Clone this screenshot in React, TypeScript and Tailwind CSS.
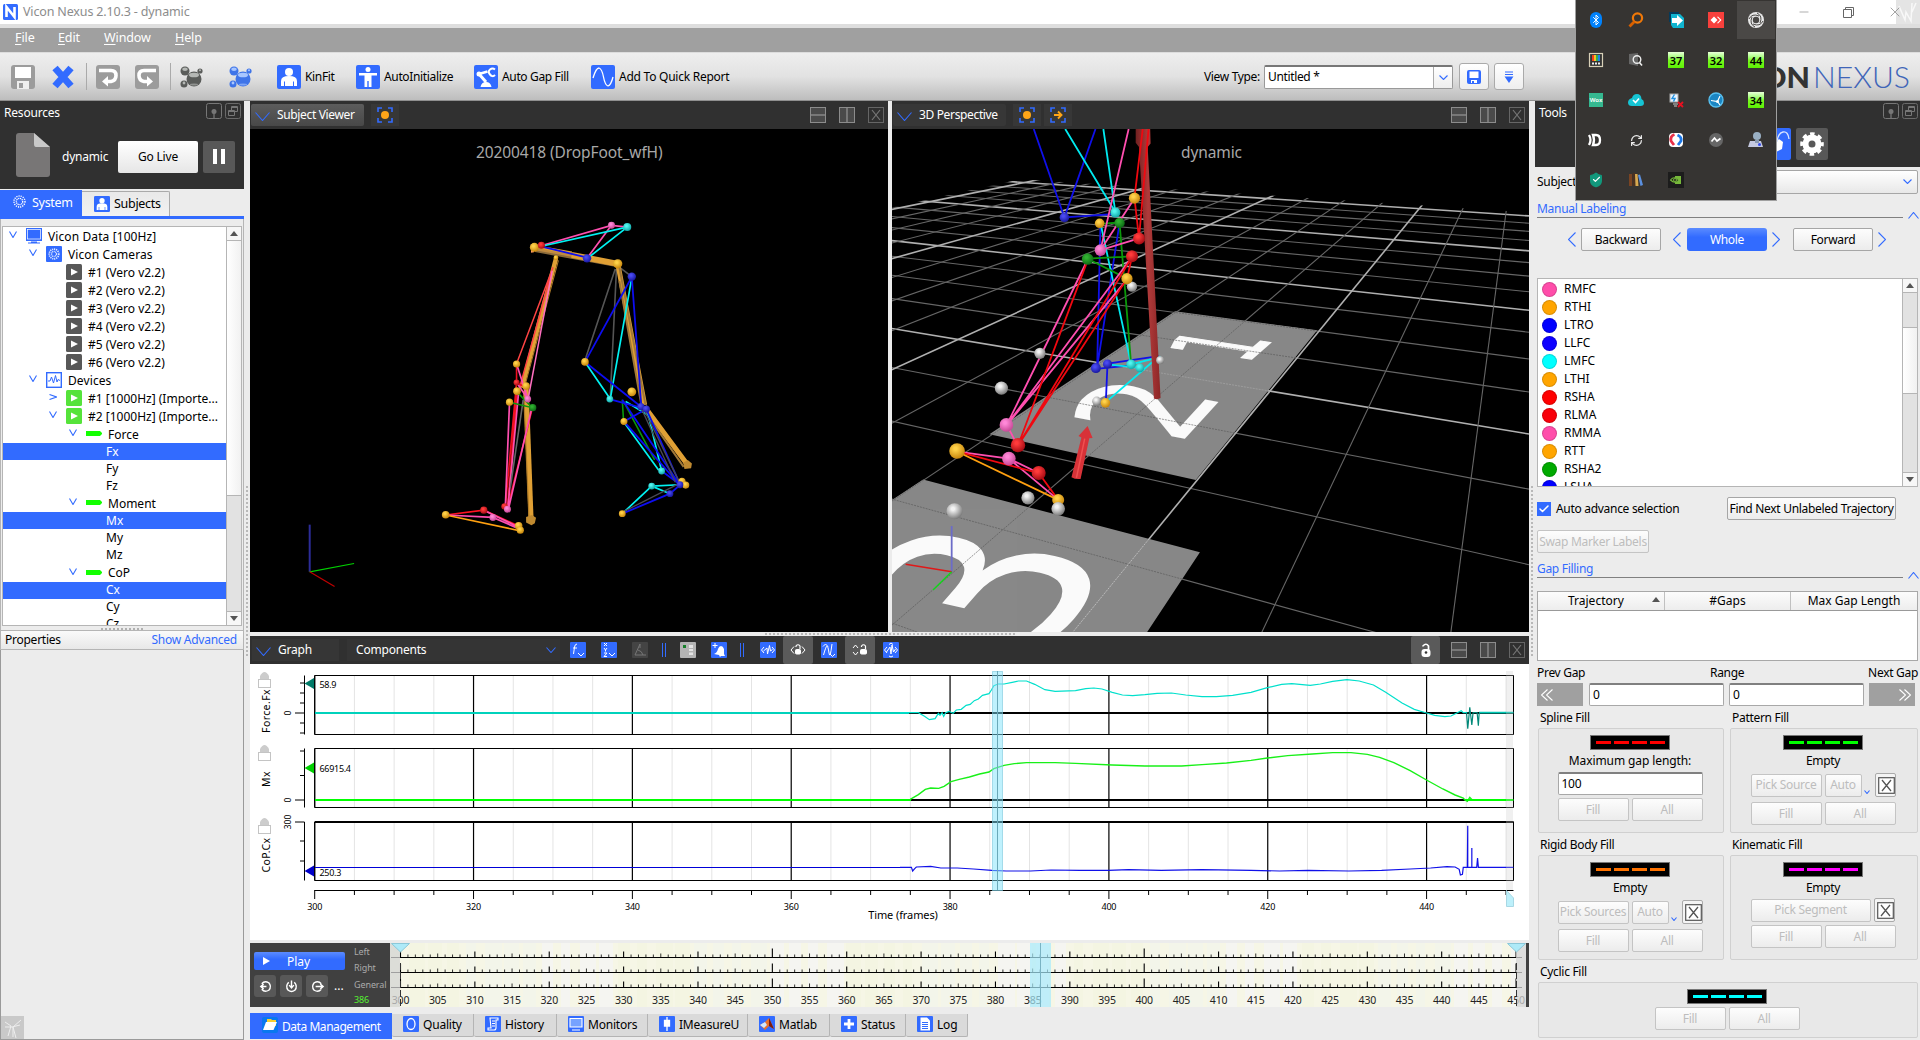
import React from "react";
import { Bluetooth, Search, Check, RefreshCw, Shield, Minus, X } from "lucide-react";

type Kids = { children?: React.ReactNode };
const BLUE = "#326bff";

/* ---------- small shared pieces ---------- */

function Chevron({ dir = "down", w = 14, h = 7, color = BLUE, sw = 1.1, className = "" }: { dir?: "down" | "up" | "left" | "right"; w?: number; h?: number; color?: string; sw?: number; className?: string }) {
  const d = {
    down: `M.5 .5L${w / 2} ${h - 0.5}L${w - 0.5} .5`,
    up: `M.5 ${h - 0.5}L${w / 2} .5L${w - 0.5} ${h - 0.5}`,
    left: `M${w - 0.5} .5L.5 ${h / 2}L${w - 0.5} ${h - 0.5}`,
    right: `M.5 .5L${w - 0.5} ${h / 2}L.5 ${h - 0.5}`,
  }[dir];
  return (
    <svg width={w} height={h} viewBox={`0 0 ${w} ${h}`} className={`shrink-0 ${className}`}>
      <path d={d} fill="none" stroke={color} strokeWidth={sw} />
    </svg>
  );
}

function Tri({ dir }: { dir: "up" | "down" }) {
  return (
    <svg width="8" height="5" viewBox="0 0 8 5" className="shrink-0">
      <path d={dir === "up" ? "M0 5L4 0L8 5Z" : "M0 0L4 5L8 0Z"} fill="#555" />
    </svg>
  );
}

function PinIcons() {
  return (
    <div className="flex gap-[3px]">
      <svg width="16" height="16" viewBox="0 0 16 16">
        <rect x=".5" y=".5" width="15" height="15" rx="2" fill="none" stroke="#777" />
        <circle cx="8" cy="8.500" r="2.500" fill="#777" />
        <path d="M8 8V15" stroke="#777" strokeWidth="1.3" />
      </svg>
      <svg width="16" height="16" viewBox="0 0 16 16">
        <rect x=".5" y=".5" width="15" height="15" rx="2" fill="none" stroke="#6a6a6a" />
        <path d="M6.500 7V3.500H12.500V8.500H9.500M6 4.500H12" fill="none" stroke="#777" />
        <path d="M3.500 7.500H9.500V12.500H3.500ZM3.500 8.500H9.500" fill="none" stroke="#777" />
      </svg>
    </div>
  );
}

function WindowIcons() {
  return (
    <div className="flex gap-[13px]">
      <svg width="16" height="16" viewBox="0 0 16 16">
        <rect x=".5" y=".5" width="15" height="15" fill="#4a4a4a" stroke="#8c8c8c" />
        <path d="M1 8H15" stroke="#8c8c8c" strokeWidth="1.4" />
      </svg>
      <svg width="16" height="16" viewBox="0 0 16 16">
        <rect x=".5" y=".5" width="15" height="15" fill="#4a4a4a" stroke="#8c8c8c" />
        <path d="M8 1V15" stroke="#8c8c8c" strokeWidth="1.4" />
      </svg>
      <svg width="16" height="16" viewBox="0 0 16 16">
        <rect x=".5" y=".5" width="15" height="15" fill="none" stroke="#666" />
        <path d="M4 3L12 13M12 3L4 13" stroke="#777" strokeWidth="1.2" />
      </svg>
    </div>
  );
}

function Focus({ arrow = false }: { arrow?: boolean }) {
  return (
    <span className="flex h-[22px] w-7 items-center justify-center bg-[#373737]">
      <svg width="16" height="16" viewBox="0 0 16 16">
        <path d="M1 5V1H5M11 1H15V5M15 11V15H11M5 15H1V11" fill="none" stroke={BLUE} strokeWidth="1.6" />
        {arrow ? <path d="M4 8H11M8 4.500L11.500 8L8 11.500" fill="none" stroke="#ffa518" strokeWidth="1.9" /> : <circle cx="8" cy="8" r="4" fill="#ffa518" />}
      </svg>
    </span>
  );
}

const Person = ({ size = 24 }: { size?: number }) => (
  <svg width={size} height={size} viewBox="0 0 24 24" className="shrink-0">
    <rect width="24" height="24" rx="2" fill={BLUE} />
    <circle cx="12" cy="7" r="4" fill="#fff" />
    <path d="M4 21V16Q4 11 12 11T20 16V21H17V16.500H16V21H8V16.500H7V21Z" fill="#fff" />
  </svg>
);

/* ---------- top bars ---------- */

function TitleBar() {
  return (
    <div className="flex h-[24px] shrink-0 items-center bg-white pl-[3px] pr-0">
      <svg width="15" height="16" viewBox="0 0 15 16">
        <rect width="15" height="16" rx="1.5" fill={BLUE} />
        <path d="M3.500 13V3L11.500 13V3" fill="none" stroke="#fff" strokeWidth="2.6" />
      </svg>
      <span className="ml-[5px] text-[12.5px] tracking-[-0.15px] text-[#8c8c8c]">Vicon Nexus 2.10.3 - dynamic</span>
      <div className="ml-auto flex h-full items-center text-[#777]">
        <Minus size={14} strokeWidth={1} className="mr-[32px]" />
        <svg width="11" height="11" viewBox="0 0 11 11" className="mr-[33px]">
          <path d="M.5 2.500H8.500V10.500H.5ZM2.500 2.500V.5H10.500V8.500H8.500" fill="none" stroke="#666" />
        </svg>
        <X size={16} strokeWidth={1} className="relative -mr-[7px]" />
        <span className="h-full w-[24px] bg-[#e4e4e4]">
          <svg width="24" height="24" viewBox="0 0 24 24">
            <path d="M3 6L9 20L10 12L15 21L16 3M20 3L16 12" fill="none" stroke="#f8f8f8" strokeWidth="1.5" />
          </svg>
        </span>
      </div>
    </div>
  );
}

function MenuBar() {
  const items: [string, string, string][] = [
    ["F", "ile", "w-[43px]"],
    ["E", "dit", "w-[46px]"],
    ["W", "indow", "w-[71px]"],
    ["H", "elp", "w-[60px]"],
  ];
  return (
    <div className="flex h-[29px] shrink-0 items-center border-b border-t-[4px] border-b-[#ddd] border-t-[#dedede] bg-[#a0a0a0] pb-[5px] pl-[15px] text-[12.5px] tracking-[-0.1px] text-white">
      {items.map(([a, b, w]) => (
        <span key={b} className={w}>
          <u className="underline-offset-2">{a}</u>
          {b}
        </span>
      ))}
    </div>
  );
}

function Molecule({ c, hi }: { c: string; hi: string }) {
  return (
    <svg width="24" height="24" viewBox="0 0 24 24" className="shrink-0">
      <g fill={c}>
        <circle cx="5" cy="6" r="4.500" />
        <circle cx="14" cy="14" r="7.500" />
        <circle cx="20" cy="6" r="2.600" />
        <circle cx="4" cy="19" r="3.500" />
      </g>
      <g fill={hi}>
        <ellipse cx="5" cy="4.300" rx="2.800" ry="1.700" />
        <ellipse cx="14" cy="10" rx="5" ry="2.300" />
        <circle cx="20" cy="5.300" r="1" />
        <circle cx="4" cy="18" r="1.400" />
        <ellipse cx="14" cy="19.500" rx="4" ry="1" opacity=".6" />
      </g>
    </svg>
  );
}

function Toolbar() {
  return (
    <div className="flex h-[48px] shrink-0 items-center border-b border-[#8f8f8f] bg-linear-to-b from-[#eeeeee] via-[#e2e2e2] to-[#bdbdbd] pl-[11px] text-[12px] tracking-[-0.35px] text-black">
      <svg width="24" height="24" viewBox="0 0 24 24" className="shrink-0">
        <rect width="24" height="24" rx="3" fill="#9c9c9c" />
        <path d="M4 2H20V13H4Z" fill="#fff" />
        <path d="M6 16H18V24H6Z" fill="#eee" />
        <path d="M8 18H12V23H8Z" fill="#9c9c9c" />
      </svg>
      <svg width="24" height="24" viewBox="0 0 24 24" className="ml-4 shrink-0">
        <path d="M4 3L20 21M20 3L4 21" stroke={BLUE} strokeWidth="7" />
      </svg>
      <span className="ml-[11px] h-[27px] w-px bg-[#aaa]" />
      {[0, 1].map((i) => (
        <svg key={i} width="24" height="24" viewBox="0 0 24 24" className={i ? "ml-[15px] shrink-0" : "ml-[9px] shrink-0"}>
          <rect width="24" height="24" rx="3" fill="#9c9c9c" />
          <g transform={i ? "matrix(-1 0 0 1 24 0)" : undefined}>
            <path d="M3 5.500H15Q20 5.500 20 10.500T15 16.500H11" fill="none" stroke="#fff" strokeWidth="3.600" />
            <path d="M12 11V21.500L6 16.500Z" fill="#fff" />
          </g>
        </svg>
      ))}
      <span className="ml-[11px] h-[27px] w-px bg-[#aaa]" />
      <div className="ml-[9px]">
        <Molecule c="#5a5c5a" hi="#b5b8b5" />
      </div>
      <div className="ml-[25px]">
        <Molecule c="#3f74e8" hi="#a8c6ff" />
      </div>
      <div className="ml-[24px] flex w-[79px] items-center gap-1">
        <Person />
        <span>KinFit</span>
      </div>
      <div className="flex w-[118px] items-center gap-1">
        <svg width="24" height="24" viewBox="0 0 24 24" className="shrink-0">
          <rect width="24" height="24" rx="2" fill={BLUE} />
          <circle cx="12" cy="4.500" r="2.500" fill="#fff" />
          <path d="M3 8H21V10.500H15.500V22H12.700V16H11.300V22H8.500V10.500H3Z" fill="#fff" />
        </svg>
        <span>AutoInitialize</span>
      </div>
      <div className="flex w-[117px] items-center gap-1">
        <svg width="24" height="24" viewBox="0 0 24 24" className="shrink-0">
          <rect width="24" height="24" rx="2" fill={BLUE} />
          <path d="M5 9L13.500 6.500" stroke="#fff" strokeWidth="2.500" />
          <path d="M5 9L12 17" stroke="#fff" strokeWidth="3" />
          <circle cx="5" cy="9" r="2.500" fill="#fff" />
          <path d="M21 4.500Q18.500 2.500 16 4.500T16 9.500T21 10" fill="none" stroke="#fff" strokeWidth="2" />
          <path d="M6.500 22Q7.500 17 12 17T17.500 22Z" fill="#fff" />
        </svg>
        <span>Auto Gap Fill</span>
      </div>
      <div className="flex items-center gap-1">
        <svg width="24" height="24" viewBox="0 0 24 24" className="shrink-0">
          <rect width="24" height="24" rx="2" fill={BLUE} />
          <path d="M2 13Q5 3 8 3Q11 4 12.500 12T17 21Q20 20 22 12" fill="none" stroke="#fff" strokeWidth="1.300" />
        </svg>
        <span className="tracking-[-0.25px]">Add To Quick Report</span>
      </div>
      <div className="ml-auto flex w-[716px] items-center">
        <span className="w-[60px]">View Type:</span>
        <div className="flex h-[24px] w-[189px] items-center rounded-[2px] border border-[#999] border-t-2 border-t-[#777] bg-white pl-[3px]">
          <span>Untitled *</span>
          <span className="ml-auto flex h-full w-[19px] items-center justify-center border-l border-[#aaa] bg-linear-to-b from-white to-[#eee]">
            <Chevron w={9} h={5} />
          </span>
        </div>
        <span className="ml-[6px] flex h-[27px] w-[30px] items-center justify-center rounded-[3px] border border-[#aaa] bg-linear-to-b from-white to-[#eee]">
          <svg width="14" height="14" viewBox="0 0 14 14">
            <rect width="14" height="14" rx="2" fill={BLUE} />
            <path d="M2.500 1.500H11.500V8H2.500ZM4 10H10V13H4Z" fill="#fff" />
            <path d="M5 11H7V13H5Z" fill={BLUE} />
          </svg>
        </span>
        <span className="ml-[5px] flex h-[27px] w-[30px] items-center justify-center rounded-[3px] border border-[#aaa] bg-linear-to-b from-white to-[#eee]">
          <svg width="10" height="12" viewBox="0 0 10 12">
            <path d="M1 1H9M1 3.500H9" stroke={BLUE} strokeWidth="1.200" />
            <path d="M.5 5.500H9.500L5 12Z" fill={BLUE} />
          </svg>
        </span>
        <svg width="150" height="40" viewBox="-5 -5 150 40" className="ml-auto mr-[10px] overflow-visible tracking-normal" fontFamily="Lato, sans-serif">
          <text x="-3" y="25.500" fontSize="29" fontWeight="900" fill="#333" textLength="48" lengthAdjust="spacingAndGlyphs">
            ON
          </text>
          <text x="48" y="25.500" fontSize="29" fontWeight="300" fill="#4065b8" textLength="97" lengthAdjust="spacingAndGlyphs">
            NEXUS
          </text>
        </svg>
      </div>
    </div>
  );
}

/* ---------- resources ---------- */

type Row = { d: number; t: string; open?: boolean; closed?: boolean; icon: "pc" | "cam" | "play" | "dev" | "green" | "bar" | "none"; sel?: boolean };
const rows: Row[] = [
  { d: 0, t: "Vicon Data [100Hz]", open: true, icon: "pc" },
  { d: 1, t: "Vicon Cameras", open: true, icon: "cam" },
  ...[1, 2, 3, 4, 5, 6].map((n): Row => ({ d: 2, t: `#${n} (Vero v2.2)`, icon: "play" })),
  { d: 1, t: "Devices", open: true, icon: "dev" },
  { d: 2, t: "#1 [1000Hz] (Importe...", closed: true, icon: "green" },
  { d: 2, t: "#2 [1000Hz] (Importe...", open: true, icon: "green" },
  { d: 3, t: "Force", open: true, icon: "bar" },
  { d: 4, t: "Fx", icon: "none", sel: true },
  { d: 4, t: "Fy", icon: "none" },
  { d: 4, t: "Fz", icon: "none" },
  { d: 3, t: "Moment", open: true, icon: "bar" },
  { d: 4, t: "Mx", icon: "none", sel: true },
  { d: 4, t: "My", icon: "none" },
  { d: 4, t: "Mz", icon: "none" },
  { d: 3, t: "CoP", open: true, icon: "bar" },
  { d: 4, t: "Cx", icon: "none", sel: true },
  { d: 4, t: "Cy", icon: "none" },
  { d: 4, t: "Cz", icon: "none" },
];

function TreeIcon({ k }: { k: Row["icon"] }) {
  if (k === "none") return null;
  return (
    <svg width="16" height="16" viewBox="0 0 16 16" className="shrink-0">
      {k === "pc" && (
        <>
          <rect x=".5" y=".5" width="15" height="12" fill={BLUE} stroke={BLUE} />
          <rect x="1.500" y="1.500" width="13" height="9.500" fill={BLUE} stroke="#fff" strokeWidth=".7" />
          <path d="M5 13.500H11V14.500H14V15.500H2V14.500H5Z" fill={BLUE} />
        </>
      )}
      {k === "cam" && (
        <>
          <rect width="16" height="16" rx="1" fill={BLUE} />
          <circle cx="8" cy="8" r="2.500" fill="none" stroke="#dfe8ff" strokeWidth="1.400" strokeDasharray="1 .6" />
          <circle cx="8" cy="8" r="4.800" fill="none" stroke="#dfe8ff" strokeWidth="1.700" strokeDasharray="1.200 .8" />
        </>
      )}
      {(k === "play" || k === "green") && (
        <>
          <rect width="16" height="16" rx="1.500" fill={k === "play" ? "#585858" : "#55e33a"} />
          <path d="M5 4.500L12 8L5 11.500Z" fill="#fff" />
        </>
      )}
      {k === "dev" && (
        <>
          <rect x=".7" y=".7" width="14.600" height="14.600" fill="#fff" stroke={BLUE} strokeWidth="1.400" />
          <path d="M2 9H4L5.500 5L7.500 11L9.500 3.500L11 10L12 7.500L14 8.500" fill="none" stroke={BLUE} />
        </>
      )}
      {k === "bar" && <path d="M0 5H14L16 7V8L14 10H0Z" fill="#12ff00" />}
    </svg>
  );
}

const indent = ["pl-[4px]", "pl-[24px]", "pl-[44px]", "pl-[64px]", "pl-[84px]"];

function ScrollBar({ thumb, before }: { thumb: string; before: string }) {
  return (
    <div className="flex w-[15px] shrink-0 flex-col border-l border-[#b5b5b5] bg-[#e2e2e2]">
      <div className="flex h-[14px] items-center justify-center border-b border-[#b5b5b5] bg-[#f7f7f7]">
        <Tri dir="up" />
      </div>
      <div className={before} />
      <div className={`border-b border-[#b5b5b5] bg-linear-to-r from-white to-[#f1f1f1] ${thumb}`} />
      <div className="mt-auto flex h-[14px] items-center justify-center border-t border-[#b5b5b5] bg-[#f7f7f7]">
        <Tri dir="down" />
      </div>
    </div>
  );
}

function Resources() {
  return (
    <aside className="flex w-[244px] shrink-0 flex-col">
      <div className="h-[88px] shrink-0 bg-[#303030] text-white">
        <div className="flex h-[21px] items-start justify-between pl-1 pr-[3px] pt-[2px]">
          <span className="pt-[2px] text-[12px] tracking-[-0.2px]">Resources</span>
          <PinIcons />
        </div>
        <div className="flex h-[67px] items-center pb-px pl-[16px] text-[12px] tracking-[-0.2px]">
          <svg width="34" height="44" viewBox="0 0 34 44">
            <path d="M3 0H18L34 14V41Q34 44 31 44H3Q0 44 0 41V3Q0 0 3 0Z" fill="#787676" />
            <path d="M18 0L34 14H20Q18 14 18 11Z" fill="#c9c9c9" />
          </svg>
          <span className="ml-3 mt-[3px] w-[56px]">dynamic</span>
          <span className="mt-[3px] flex h-[32px] w-[80px] items-center justify-center rounded-[2px] bg-linear-to-b from-white to-[#e6e6e6] text-black">Go Live</span>
          <span className="ml-[5px] mt-[3px] flex h-[32px] w-[32px] items-center justify-center gap-1 rounded-[2px] bg-[#585858]">
            <i className="h-[15px] w-[4px] bg-white" />
            <i className="h-[15px] w-[4px] bg-white" />
          </span>
        </div>
      </div>
      <div className="flex h-[30px] shrink-0 items-end border-b-[3px] border-[#326bff] pt-[1px] text-[12.5px] tracking-[-0.3px]">
        <div className="flex h-[26px] w-[82px] items-center gap-[6px] bg-[#326bff] pl-[13px] text-white">
          <svg width="13" height="13" viewBox="0 0 13 13" className="mb-[3px]">
            <circle cx="6.500" cy="6.500" r="3.200" fill="none" stroke="#fff" strokeWidth="1.300" strokeDasharray="1.200 .7" />
            <circle cx="6.500" cy="6.500" r="5.500" fill="none" stroke="#fff" strokeWidth="1.400" strokeDasharray="1.200 1" />
          </svg>
          <span>System</span>
        </div>
        <div className="flex h-[25px] w-[88px] items-center gap-1 rounded-tr-[2px] border-r border-t border-[#aaa] bg-linear-to-b from-[#e9e9e9] to-[#f2f2f2] pl-[12px] text-black">
          <Person size={16} />
          <span>Subjects</span>
        </div>
      </div>
      <div className="flex h-[411px] shrink-0 flex-col border-x border-[#b5b5b5] pt-[7px]">
        <div className="mx-px flex h-[400px] border border-[#b5b5b5] bg-white">
          <div className="flex-1 overflow-hidden text-[12px]">
            {rows.map((r, i) => (
              <div key={i} className={`flex items-center ${r.icon === "none" ? "h-[17.1px]" : "h-[18px]"} ${indent[r.d]} ${r.sel ? "bg-[#326bff] text-white" : "text-black"}`}>
                <span className="flex w-[19px] shrink-0 items-center pb-[3px] pl-[2px]">
                  {r.open && <Chevron w={8} h={7} />}
                  {r.closed && <Chevron dir="right" w={8} h={6} />}
                </span>
                <TreeIcon k={r.icon} />
                <span className={r.icon === "none" ? "whitespace-nowrap" : `ml-[6px] pt-px whitespace-nowrap ${r.d < 2 ? "tracking-[0.1px]" : ""}`}>{r.t}</span>
              </div>
            ))}
          </div>
          <ScrollBar before="h-0" thumb="h-[255px]" />
        </div>
        <div className="mx-auto mt-[2px] h-0 w-[42px] border-t-2 border-dotted border-[#b0b0b0]" />
      </div>
      <div className="flex h-[20px] shrink-0 items-center justify-between border border-[#b5b5b5] bg-linear-to-b from-[#fafafa] to-[#e8e8e8] pl-1 pr-[6px] text-[12px] tracking-[-0.25px]">
        <span>Properties</span>
        <span className="text-[#326bff]">Show Advanced</span>
      </div>
      <div className="flex flex-1 items-end border-x border-b border-[#9a9a9a]">
        <div className="h-[23px] w-[23px] bg-[#c9c9c9]">
          <svg width="23" height="23" viewBox="0 0 23 23">
            <path d="M4 6L10 10L7 20M20 4L12 11L15 22M4 11L11 11L19 9M12 11L12 21" fill="none" stroke="#eee" />
          </svg>
        </div>
      </div>
    </aside>
  );
}

/* ---------- 3D views ---------- */

const KX = 2.412;
const KY = 2.904;
const ballColors: Record<string, [string, string]> = {
  y: ["#ffd24a", "#c8860c"],
  r: ["#ff3b3b", "#a80c14"],
  b: ["#4a4af0", "#1818a0"],
  c: ["#52f5f0", "#12a8a8"],
  p: ["#ff88d8", "#c84a98"],
  g: ["#30b030", "#0c6a14"],
  w: ["#f2f2f2", "#7c7c7c"],
};
type Ball = [string, number, number, number];
type Seg = [string, number, string];

function Balls({ list, id }: { list: Ball[]; id: string }) {
  return (
    <>
      <defs>
        {Object.entries(ballColors).map(([k, [a, b]]) => (
          <radialGradient key={k} id={`${id}-${k}`} cx=".4" cy=".35" r=".65">
            <stop offset=".15" stopColor={a} />
            <stop offset="1" stopColor={b} />
          </radialGradient>
        ))}
      </defs>
      {list.map(([k, x, y, r], i) => (
        <ellipse key={i} cx={x} cy={y} rx={r * KX} ry={r * KY} fill={`url(#${id}-${k})`} />
      ))}
    </>
  );
}

function Segs({ list }: { list: Seg[] }) {
  return (
    <g fill="none">
      {list.map(([stroke, w, d], i) => (
        <path key={i} d={d} stroke={stroke} strokeWidth={w} vectorEffect="non-scaling-stroke" />
      ))}
    </g>
  );
}

const GOLD = "#e0a035";
const subjectSegs: Seg[] = [
  ["#555", 1.6, "M905 505L832 770M908 505L893 880M910 495L945 527"],
  ["#8a6a3a", 4, "M712 450L912 494"],
  [GOLD, 4, "M712 441L800 460"],
  ["#c08a40", 2.4, "M712 447L838 474"],
  [GOLD, 6, "M800 464L912 490"],
  [GOLD, 5, "M912 495L976 900M976 905L1078 1072"],
  ["#a07838", 2, "M915 540L968 900M980 925L1070 1080M915 500L978 900"],
  [GOLD, 4.5, "M762 475L680 850"],
  ["#b07c28", 1, "M768 480L686 850"],
  [GOLD, 5, "M690 845L702 1232"],
  ["#b07c28", 1.2, "M684 860L697 1232"],
  ["#ff4fb0", 1.7, "M730 436L896 378L934 383M896 378L838 472"],
  ["#00f2f2", 1.7, "M730 438L934 383L838 474"],
  ["#0d0df0", 1.8, "M728 440L838 472"],
  ["#f44", 1.5, "M755 500L667 780M750 520L672 860"],
  ["#ff6fc0", 1.5, "M753 510L695 882"],
  ["#f01020", 1.6, "M667 782L667 835L690 850M667 835L640 1195M668 865L645 1200M705 910L645 1200"],
  ["#ff4fb0", 1.7, "M668 785L694 882M650 892L640 1195M672 862L646 1200M703 912L648 1200M667 835L694 882"],
  ["#666", 1.6, "M683 885L652 1140"],
  ["#0a980a", 1.6, "M650 892L705 908L670 865M922 885L925 945M925 890L1000 1060"],
  ["#f12", 1.7, "M496 1220L588 1206L672 1252"],
  ["#ff4fb0", 1.7, "M496 1220L610 1227L676 1262M588 1206L676 1258"],
  ["#ffa010", 1.6, "M496 1220L676 1266"],
  ["#00f2f2", 1.7, "M945 530L893 883L832 775M930 890L985 930L1017 1092M926 950L1010 1090M922 1216L993 1136L1060 1132M993 1136L1037 1158"],
  ["#0d0df0", 1.8, "M945 528L832 775L968 906L945 528M893 884L980 912L926 948L1060 1132M922 885L1062 1135M980 912L1062 1132L1017 1092M922 1216L1037 1158L1062 1132"],
  ["#4a4a55", 1.3, "M968 910L1050 1125M975 915L1058 1120M922 1212L1060 1128"],
];
const subjectBalls: Ball[] = [
  ["y", 710, 442, 4.5], ["r", 727, 436, 3.5], ["p", 896, 378, 3.5], ["c", 934, 383, 4], ["b", 837, 474, 4.2], ["y", 911, 490, 4.6], ["b", 945, 527, 4.2],
  ["y", 762, 472, 2.4], ["y", 832, 775, 3.8], ["c", 892, 883, 3.4], ["y", 667, 781, 3.6], ["r", 667, 835, 3], ["y", 690, 845, 3.8], ["y", 668, 860, 3.8], ["p", 694, 883, 3.4],
  ["y", 650, 892, 3.6], ["g", 706, 908, 3.6], ["y", 945, 862, 4.4], ["b", 967, 905, 3.6], ["b", 980, 912, 3.6], ["y", 926, 948, 3.5],
  ["c", 1017, 1092, 3.4], ["y", 1066, 1122, 3.6], ["y", 1075, 1133, 3.6], ["b", 1061, 1132, 3.4], ["c", 993, 1136, 3.4], ["b", 1037, 1158, 3.4], ["y", 922, 1216, 3.4],
  ["r", 638, 1195, 3.2], ["p", 645, 1203, 3.5], ["r", 588, 1206, 3.6], ["p", 610, 1227, 3.5], ["y", 496, 1219, 3.8], ["y", 672, 1251, 3.8], ["y", 676, 1264, 3.6],
];

function SubjectScene() {
  return (
    <svg viewBox="24 98 1539 1462" preserveAspectRatio="none" className="absolute inset-0 h-full w-full">
      <Segs list={subjectSegs} />
      <path d="M690 1226L704 1220L714 1228L711 1244L703 1250L690 1242ZM1069 1068L1080 1060L1090 1070L1088 1084L1072 1086Z" fill="#c08a30" />
      <path d="M701 434L712 430L709 456L702 458Z" fill="#ff9a60" />
      <Balls list={subjectBalls} id="sv" />
      <Segs
        list={[
          ["#2c2c98", 2, "M168 1248V1385"],
          ["#00d000", 1.2, "M168 1385L275 1361"],
          ["#c00000", 1.2, "M168 1385L228 1428"],
        ]}
      />
    </svg>
  );
}

const floorA = Array.from({ length: 18 }, (_, i) => {
  const m = i - 5;
  const inv = 0.000976 + 0.000132 * m;
  return { m, y: 1 / inv - 40 };
});
const floorB = Array.from({ length: 15 }, (_, n) => ({ n, k: 0.109 + 0.285 * n }));

const perspSegs: Seg[] = [
  ["#1010e8", 1.8, "M359 98L433 355L508 98M433 355L556 345"],
  ["#00eaf0", 1.8, "M435 98L556 340L527 98"],
  ["#1010e8", 1.8, "M520 372L512 790M566 372L512 790M509 795L594 785M537 780L660 758M537 780L533 890"],
  ["#00eaf0", 1.8, "M520 372L594 782L665 760M660 760L533 892M537 782L615 792"],
  ["#0a980a", 1.8, "M519 374L566 370L594 782M489 475L596 468M489 475L584 533"],
];
const perspSegsTop: Seg[] = [
  ["#ff4fb0", 1.8, "M588 98L520 450L602 300M520 450L613 416"],
  ["#f00810", 1.8, "M622 98L602 298L613 416L636 98"],
  ["#ff4fb0", 1.8, "M489 478L294 958L596 470M294 958L584 535M294 958L320 1018"],
  ["#f00810", 1.8, "M489 480L321 1018L596 470L584 533L321 1018"],
  ["#ff4fb0", 1.8, "M175 1036L299 1056L371 1098M299 1056L418 1176"],
  ["#f00810", 1.8, "M175 1036L371 1098L418 1176"],
  ["#ffa010", 1.8, "M175 1036L418 1176"],
];
const perspBalls: Ball[] = [
  ["w", 374, 750, 5.6], ["w", 281, 851, 6.6], ["w", 596, 556, 5.2], ["w", 664, 770, 4], ["w", 345, 1170, 6.6], ["w", 168, 1209, 8], ["w", 511, 889, 4.6],
  ["b", 433, 355, 4.8], ["c", 556, 341, 5], ["y", 602, 299, 5.6], ["y", 518, 372, 4.8], ["g", 566, 371, 5.2], ["r", 613, 416, 6], ["p", 520, 450, 5.8],
  ["g", 489, 476, 5.8], ["r", 596, 468, 6], ["y", 584, 533, 5.6], ["b", 509, 793, 5], ["b", 537, 781, 4.6], ["c", 594, 782, 4.8], ["c", 615, 792, 4.4], ["y", 532, 894, 4.8],
  ["p", 293, 958, 6.8], ["r", 321, 1017, 7.2], ["y", 174, 1034, 7.8], ["p", 299, 1056, 6.8], ["r", 371, 1098, 7], ["y", 418, 1176, 6], ["w", 418, 1202, 6.8],
];

function PerspectiveScene() {
  return (
    <svg viewBox="17 98 1537 1462" preserveAspectRatio="none" className="absolute inset-0 h-full w-full">
      <defs>
        <clipPath id="floor">
          <path d="M328 244L1560 341V1565H10V328Z" />
        </clipPath>
        <clipPath id="plates">
          <path d="M700 628L1043 683L750 1118L252 985ZM92 1117L760 1328L630 1565H10V1182Z" />
        </clipPath>
        <linearGradient id="force" x1="0" x2="1">
          <stop offset="0" stopColor="#702020" />
          <stop offset=".5" stopColor="#b03a3a" />
          <stop offset="1" stopColor="#8c2626" />
        </linearGradient>
      </defs>
      <g clipPath="url(#floor)" fill="none">
        {floorA.map(({ m, y }) => (
          <path key={m} d={`M-3733 -71L1554 ${y}`} stroke={m % 4 === 0 ? "#b0b0b0" : "#666"} strokeWidth={m % 4 === 0 ? 1.6 : 1.1} vectorEffect="non-scaling-stroke" />
        ))}
        {floorB.map(({ n, k }) => (
          <path key={n} d={`M1540 -40L${1540 - k * 1640} 1600`} stroke={n % 4 === 2 ? "#b0b0b0" : "#666"} strokeWidth={n % 4 === 2 ? 1.6 : 1.1} vectorEffect="non-scaling-stroke" />
        ))}
      </g>
      <path d="M700 628L1043 683L750 1118L252 985ZM92 1117L760 1328L630 1565H10V1182Z" fill="#888" />
      <g fill="#fafafa" fontFamily="DejaVu Sans, sans-serif" fontSize="100">
        <text transform="matrix(1.1 -1.15 2.74 .5 870 781)" stroke="#fafafa" strokeWidth="2">
          1
        </text>
        <text transform="matrix(1.75 -2.3 3.85 .88 711 1015)">2</text>
        <text transform="matrix(3.6 -5 6.6 1.8 349 1655)">3</text>
      </g>
      <g clipPath="url(#plates)" fill="none" strokeWidth="1" strokeDasharray="2 1" opacity=".6">
        {floorA
          .filter((l) => l.m < 4)
          .map(({ m, y }) => (
            <path key={m} d={`M-3733 -71L1554 ${y}`} stroke={m === 0 ? "#aaa" : "#555"} vectorEffect="non-scaling-stroke" />
          ))}
        {floorB
          .filter((l) => l.n < 6)
          .map(({ n, k }) => (
            <path key={n} d={`M1540 -40L${1540 - k * 1640} 1600`} stroke={n === 2 ? "#ddd" : "#555"} vectorEffect="non-scaling-stroke" />
          ))}
      </g>
      <Segs list={perspSegs} />
      <path d="M605 98H640L641 140L634 150L665 880Q657 886 649 881L613 150L605 138Z" fill="url(#force)" />
      <path d="M450 1110L474 995L467 990L489 961L501 996L493 997L472 1115Q460 1117 450 1110Z" fill="#d83238" />
      <path d="M462 1112L482 998" stroke="#f05050" strokeWidth="1.500" vectorEffect="non-scaling-stroke" />
      <Segs list={perspSegsTop} />
      <Balls list={perspBalls} id="pv" />
      <Segs
        list={[
          ["#6c6cc8", 1.8, "M161 1252V1385"],
          ["#e01818", 1.4, "M50 1363L161 1385"],
          ["#10d818", 1.4, "M161 1385L116 1438"],
        ]}
      />
    </svg>
  );
}

function ViewPane({ title, label, labelClass, arrow, selected, children, className }: Kids & { title: string; label: string; labelClass: string; arrow?: boolean; selected?: boolean; className: string }) {
  return (
    <section className={`flex h-[531px] flex-col ${className}`}>
      <div className="flex h-[28px] shrink-0 items-center bg-[#303030] pl-px pr-[4px] text-[12px] tracking-[-0.35px] text-white">
        <div className={`flex h-[22px] w-[113px] items-center gap-[7px] rounded-[2px] pl-1 ${selected ? "bg-linear-to-b from-[#5c5c5c] to-[#484848]" : "bg-[#373737]"}`}>
          <Chevron w={15} h={9} className="mt-[3px]" />
          <span className="whitespace-nowrap">{title}</span>
        </div>
        <div className="ml-[7px] flex gap-[3px]">
          <Focus />
          {arrow && <Focus arrow />}
        </div>
        <div className="ml-auto">
          <WindowIcons />
        </div>
      </div>
      <div className="relative flex-1 overflow-hidden bg-black">
        {children}
        <span className={`absolute top-[12px] text-[15.500px] leading-[22px] tracking-[-0.1px] whitespace-nowrap text-[#a8a8a8] ${labelClass}`}>{label}</span>
      </div>
    </section>
  );
}

/* ---------- graph ---------- */

function GraphIcon({ d, bg = BLUE, fg = "#fff", children }: Kids & { d?: string; bg?: string; fg?: string }) {
  return (
    <svg width="16" height="16" viewBox="0 0 16 16">
      <rect width="16" height="16" rx="1" fill={bg} />
      {d && <path d={d} fill="none" stroke={fg} strokeWidth="1" />}
      {children}
    </svg>
  );
}

function GraphHeader() {
  const cell = "flex h-[24px] items-center justify-center";
  return (
    <div className="flex h-[28px] shrink-0 items-center bg-[#303030] pl-[2px] pr-[4px] text-[12px] tracking-[-0.2px] text-white">
      <div className="flex h-[22px] w-[87px] items-center gap-[7px] bg-[#363636] pl-1">
        <Chevron w={15} h={9} className="mt-[3px]" />
        <span>Graph</span>
      </div>
      <div className="ml-[8px] flex h-[22px] w-[213px] items-center justify-between bg-[#343434] pl-[9px] pr-[4px]">
        <span>Components</span>
        <Chevron w={10} h={6} />
      </div>
      <div className={`${cell} ml-[2px] w-[31px]`}>
        <GraphIcon d="M7 2Q5 2 4.500 5L3.500 12M3 6H7M8 11L11 14L14 11" />
      </div>
      <div className={`${cell} w-[31px]`}>
        <GraphIcon d="M3 1L6 4M6 1L3 4M3 6L4.500 8L6 6M4.500 8V9.500M3 11H6L3 14.500H6M8 11L11 14L14 11" />
      </div>
      <div className={`${cell} w-[31px]`}>
        <GraphIcon bg="#444" fg="#777" d="M8 2L3 13H14M8 2V6M6 8Q10 9 11 13" />
      </div>
      <div className="ml-[7px] flex h-[14px] w-[4px] border-x border-[#326bff]" />
      <div className={`${cell} ml-[6px] w-[31px]`}>
        <GraphIcon bg="#b4b4b4">
          <rect x="3" y="3" width="3" height="3" fill="#16802a" />
          <path d="M9 3H13V6H9ZM9 7H13V9H9ZM9 10.500H13V13H9Z" fill="#e4e4e4" />
        </GraphIcon>
      </div>
      <div className={`${cell} w-[31px]`}>
        <GraphIcon d="M1.500 3.500H6.500M4 1V6" fg="#fff">
          <path d="M3 12Q6 11 7 7Q8 4 10 4T13 7V12L14 14H10L9 15L8 13Z" fill="#fff" />
        </GraphIcon>
      </div>
      <div className="ml-[6px] h-[14px] w-[4px] border-x border-[#326bff]" />
      <div className={`${cell} ml-[8px] w-[31px]`}>
        <GraphIcon d="M4 5L1.500 8L4 11M12 5L14.500 8L12 11M3.500 9L7 6L7.500 12L9.500 3.500L10.500 9L12.500 7.500" />
      </div>
      <div className={`${cell} h-[28px] w-[30px] rounded-[2px] bg-[#5a5a5a]`}>
        <svg width="18" height="16" viewBox="0 0 18 16" fill="none" stroke="#fff">
          <path d="M5 4.500L2 8L5 11.500M13 4.500L16 8L13 11.500" strokeWidth="1" />
          <rect x="6.500" y="7.500" width="5" height="4.500" rx="1" fill="#fff" />
          <path d="M7 5V4Q9 1.500 11 4V7" strokeWidth="1.200" />
        </svg>
      </div>
      <div className={`${cell} w-[32px]`}>
        <GraphIcon d="M2 4.500L4.500 2L7 4.500M2.500 13Q5 4 6 4T8 11T11 2M9 12L11.500 14.500L14 12" />
      </div>
      <div className={`${cell} h-[28px] w-[30px] rounded-[2px] bg-[#5a5a5a]`}>
        <svg width="18" height="16" viewBox="0 0 18 16" fill="none" stroke="#fff">
          <path d="M2 6L4.500 3L7 6M2 10L4.500 13L7 10" strokeWidth="1" />
          <rect x="9.500" y="7.500" width="6" height="4.500" rx="1" fill="#fff" />
          <path d="M10.500 5V4Q12.500 1.500 14.500 4V7" strokeWidth="1.200" />
        </svg>
      </div>
      <div className={`${cell} w-[32px]`}>
        <GraphIcon d="M4 5L1.500 8L4 11M12 5L14.500 8L12 11M3.500 10L7 5L8 12L9 3L10.500 10L12.500 7M6 2.500L8 1L10 2.500M6 14L8 15L10 14" />
      </div>
      <div className="ml-auto mr-[11px] flex h-[28px] w-[29px] items-center justify-center rounded-[2px] bg-[#5a5a5a]">
        <svg width="12" height="16" viewBox="0 0 12 16">
          <rect x="1.500" y="7" width="9" height="8" rx="3" fill="#fff" />
          <path d="M3 4.500V4Q6 .5 8.500 4V8" fill="none" stroke="#fff" strokeWidth="1.700" />
          <circle cx="6" cy="10.500" r="1.300" fill="#333" />
        </svg>
      </div>
      <WindowIcons />
    </div>
  );
}

const F0 = 314.7;
const FW = 7.942;
const gx = (f: number) => F0 + (f - 300) * FW;

const plots = [
  { top: 675.5, bottom: 734.5, zero: 713, name: "Force.Fx", color: "#007a68", mark: 683.5, value: "58.9", ticks: [683, 693, 703, 713, 723, 733], tickLabel: "0", tickY: 713, lock: 671, nameY: 711 },
  { top: 748.5, bottom: 807.5, zero: 800, name: "Mx", color: "#00d000", mark: 768, value: "66915.4", ticks: [751, 775.5, 800], tickLabel: "0", tickY: 800, lock: 744, nameY: 779 },
  { top: 822, bottom: 880.5, zero: 822, name: "CoP.Cx", color: "#0000c8", mark: 871, value: "250.3", ticks: [822, 841, 861], tickLabel: "300", tickY: 822, lock: 817, nameY: 855 },
];

function GraphPlots() {
  const fives = Array.from({ length: 31 }, (_, i) => 300 + i * 5);
  return (
    <svg width="1279" height="276" viewBox="250 664 1279 276" className="block bg-white" fontFamily="Noto Sans, sans-serif">
      {plots.map((p, i) => (
        <g key={p.name}>
          {fives.map((f) => (
            <path key={f} d={`M${gx(f)} ${p.top}V${p.bottom}`} stroke={f % 20 === 0 ? "#000" : "#e4e4e4"} strokeWidth={f % 20 === 0 ? 1.2 : 1} />
          ))}
          <path d={`M${F0} ${p.top}H1513.500V${p.bottom}H${F0}Z`} fill="none" stroke="#000" strokeWidth="1" />
          <path d={`M${F0} ${p.zero}H1513.500`} stroke="#000" strokeWidth="2" />
          <path d={`M304.500 ${p.top}V${p.bottom}`} stroke="#000" />
          {p.ticks.map((t) => (
            <path key={t} d={`M${t === p.tickY ? 295 : 300} ${t}H304.500`} stroke="#000" />
          ))}
          <path d={`M304.500 ${p.mark}L314 ${p.mark - 5.5}V${p.mark + 5.5}Z`} fill={p.color} />
          <text x="319.500" y={p.mark + (i === 2 ? 4.5 : 4)} fontSize="9" letterSpacing="-0.300">
            {p.value}
          </text>
          <text transform={`translate(291 ${p.tickY}) rotate(-90)`} textAnchor="middle" fontSize="8.500">
            {p.tickLabel}
          </text>
          <text transform={`translate(270 ${p.nameY}) rotate(-90)`} textAnchor="middle" fontSize="10.500" letterSpacing=".4">
            {p.name}
          </text>
          <rect x="258.500" y={p.lock + 8.5} width="12" height="8" fill="#fff" stroke="#c4c4c4" />
          <path d={`M260 ${p.lock + 8}V${p.lock + 5}Q264.500 ${p.lock - 3} 269 ${p.lock + 5}V${p.lock + 8}Z`} fill="#ccc" />
        </g>
      ))}
      <path d="M315 713H909" stroke="#00d2bc" strokeWidth="2" />
      <path d="M315 800H911" stroke="#00ff00" strokeWidth="2" />
      <path d="M315 867.500H911" stroke="#0000d8" strokeWidth="1.200" />
      <g transform="translate(900 630) scale(.40816 .33333)" fill="none" strokeWidth="1.200">
        <path
          d="M0 248H45L60 259L72 269L86 266L94 250L98 256L103 248L107 259L112 248L120 244L130 250L138 240L150 238L162 226L172 223L182 212L192 207L202 196L218 191L224 180L230 167L240 162L255 162L275 157L290 153L310 153L330 163L355 179L380 184L430 182L455 176L475 174L495 177L520 187L545 195L570 197L600 194L630 190L665 189L700 195L740 200L775 200L815 196L860 187L900 173L935 163L960 161L1005 166L1030 162L1060 154L1095 149L1125 153L1160 165L1190 187L1230 219L1260 238L1290 249L1310 256L1335 260L1350 258L1375 242L1380 248H1390"
          stroke="#00e0cc"
          vectorEffect="non-scaling-stroke"
        />
        <path d="M1388 248L1391 296L1396 232L1401 285L1404 248H1414L1417 287L1419 248" stroke="#008878" vectorEffect="non-scaling-stroke" />
        <path d="M1419 248H1503" stroke="#00c8b4" strokeWidth="1.800" vectorEffect="non-scaling-stroke" />
        <path
          d="M25 508L45 494L62 478L75 474L95 475L108 469L125 455L145 448L170 441L195 432L218 426L230 416L255 406L280 401L310 398H380L430 400L520 405L600 408H690L740 404L800 399L860 391L900 384L950 377L1010 372L1060 368H1105L1145 373L1175 382L1210 398L1250 422L1290 450L1330 477L1360 495L1380 504L1384 510L1390 514L1396 502L1402 510"
          stroke="#18f018"
          strokeWidth="1.400"
          vectorEffect="non-scaling-stroke"
        />
        <path d="M1384 510H1503" stroke="#00ff00" strokeWidth="2" vectorEffect="non-scaling-stroke" />
        <path
          d="M0 712H28L31 723L36 716L40 711L75 709L100 714L140 714L180 717L225 721L260 723H320L370 720L440 721H510L560 719L640 721L740 719L860 721L930 723L1000 721L1100 723L1180 721L1250 717L1300 714L1340 710L1360 711L1370 718L1373 735L1378 733L1380 712H1390L1391 587V712H1401V654V712H1413L1415 684L1417 712H1503"
          stroke="#1010e8"
          vectorEffect="non-scaling-stroke"
        />
      </g>
      <path d={`M${F0} 890.500H1513.500`} stroke="#000" />
      {fives.map((f) => (
        <path key={f} d={`M${gx(f)} 890V${f % 20 === 0 ? 899 : 895}`} stroke="#000" />
      ))}
      {[300, 320, 340, 360, 380, 400, 420, 440].map((f) => (
        <text key={f} x={gx(f)} y="909.500" fontSize="9" letterSpacing="-0.200" textAnchor="middle">
          {f}
        </text>
      ))}
      <text x="903" y="919" fontSize="11" textAnchor="middle" letterSpacing="-0.100">
        Time (frames)
      </text>
      <rect x="992.500" y="671.500" width="10" height="219" fill="#7fe3fb" fillOpacity=".5" stroke="#7cc8dc" strokeOpacity=".6" />
      <path d="M997.500 671V890" stroke="#6aa8b8" />
      <rect x="1506" y="671" width="7" height="219" fill="#ccc" fillOpacity=".3" />
      <path d="M1506.500 890.500L1513.500 898V906.500H1506.500Z" fill="#bdf0fb" stroke="#a8d8e4" />
    </svg>
  );
}

/* ---------- timeline ---------- */

const TW = 7.437;
const tx = (f: number) => 400.5 + (f - 300) * TW;

function Timeline() {
  const frames = Array.from({ length: 151 }, (_, i) => 300 + i);
  const tint = ["#f4f5e2", "#f7f6dc", "#f3f5ea", "#f6f6e0", "#f5f5f1", "#f4f6e6"];
  return (
    <div className="flex h-[64px] shrink-0 bg-[#404040]">
      <div className="flex w-[140px] shrink-0 text-white">
        <div className="flex w-[101px] flex-col pl-[4px] pt-[9px]">
          <div className="flex h-[18px] w-[91px] items-center rounded-[2px] bg-linear-to-b from-[#5b8bff] via-[#326bff] via-40% to-[#326bff] text-[12px]">
            <svg width="7" height="8" viewBox="0 0 7 8" className="ml-[9px]">
              <path d="M0 0L7 4L0 8Z" fill="#fff" />
            </svg>
            <span className="ml-[17px] pt-px">Play</span>
          </div>
          <div className="mt-[5px] flex items-center gap-1">
            {["M4 5Q7 1.500 11.500 4Q15 8 11.500 12Q7 14.500 4 11M2.500 8H9M6 5.500L3 8L6 10.500", "M5 3.500Q1 8 4.500 12Q8 14.500 11.500 12Q15 8 11 3.500M8 1.500V9M5.500 6.500L8 9.500L10.500 6.500", "M12 5Q9 1.500 4.500 4Q1 8 4.500 12Q9 14.500 12 11M6 8H13.500M11 5.500L14 8L11 10.500"].map((d) => (
              <span key={d} className="flex h-[22px] w-[22px] items-center justify-center rounded-[3px] bg-[#585858]">
                <svg width="15" height="15" viewBox="0 0 16 16">
                  <path d={d} fill="none" stroke="#fff" strokeWidth="1.500" />
                </svg>
              </span>
            ))}
            <span className="pl-[2px] text-[12px] leading-none">...</span>
          </div>
        </div>
        <div className="flex flex-col pl-[3px] text-[9px] tracking-[-0.1px] text-[#aaa]">
          <span className="h-[16px] leading-[17px]">Left</span>
          <span className="h-[17px] leading-[17px]">Right</span>
          <span className="h-[17px] leading-[17px]">General</span>
          <span className="h-[14px] leading-[14px] text-[#55f030]">386</span>
        </div>
      </div>
      <svg width="1136" height="64" viewBox="390 943 1136 64" fontFamily="Noto Sans, sans-serif">
        <rect x="390" y="943" width="1136" height="64" fill="#f6f6e6" />
        {Array.from({ length: 60 }, (_, i) => (
          <rect key={i} x={390 + i * 19} y="943" width={9 + ((i * 7) % 9)} height="64" fill={tint[(i * 5 + (i % 4)) % 6]} />
        ))}
        {[957.5, 972.5, 987.5].map((y) => (
          <g key={y} stroke="#000">
            <path d={`M391 ${y}H1522`} />
            {frames.map((f) => (
              <path key={f} d={`M${tx(f)} ${y}v${f % 50 === 0 ? -9 : f % 10 === 0 ? -6 : f % 5 === 0 ? -4 : -3}`} strokeWidth={f % 10 === 0 ? 1.1 : 0.8} />
            ))}
          </g>
        ))}
        {frames
          .filter((f) => f % 5 === 0)
          .map((f) => (
            <text key={f} x={tx(f)} y="1003.500" fontSize="10.500" textAnchor="middle" letterSpacing="-0.200" fill="#222">
              {f}
            </text>
          ))}
        <rect x="390" y="943" width="10" height="64" fill="#d4d4d4" fillOpacity=".75" />
        <rect x="1516" y="943" width="10" height="64" fill="#d4d4d4" fillOpacity=".75" />
        <path d="M400.500 963V1007M1516.500 963V1007" stroke="#333" strokeDasharray="7 2" />
        <path d="M391.500 943.500H409.500L400.500 952Z M1507.500 943.500H1525.500L1516.500 952Z" fill="#aeeaf8" stroke="#8cc8d8" />
        <rect x="1030" y="943" width="21" height="64" fill="#a8ebfc" fillOpacity=".7" />
        <path d="M1040.500 943V1007" stroke="#7ab4c4" />
      </svg>
    </div>
  );
}

const tabs: [string, string, React.ReactNode][] = [
  ["Quality", "w-[82px]", <ellipse key="q" cx="8" cy="8" rx="4" ry="5.500" fill="none" stroke="#fff" strokeWidth="1.300" />],
  ["History", "w-[83px]", <path key="h" d="M5 2H13V4H11V12Q11 14 9 14H3V12H6ZM7 5H10M7 7.500H10M7 10H10" fill="none" stroke="#fff" strokeWidth="1.100" />],
  ["Monitors", "w-[91px]", <path key="m" d="M2 2.500H14V11H2ZM4 14H12" fill="#76a2ff" stroke="#fff" strokeWidth="1.100" />],
  ["IMeasureU", "w-[100px]", <path key="i" d="M8 1V15M5.500 4.500H10.500V10H5.500Z" fill="#fff" stroke="#fff" strokeWidth="1.300" />],
  [
    "Matlab",
    "w-[82px]",
    <g key="l">
      <path d="M1 9L6 6L10 2L15 13L10 10L6 14Z" fill="#e8702a" />
      <path d="M1 9L6 6L8 9L5 12Z" fill="#cfe6ff" />
      <path d="M10 2L15 13L10 10Z" fill="#7a1a10" />
    </g>,
  ],
  ["Status", "w-[76px]", <path key="s" d="M8 3V13M3 8H13" stroke="#fff" strokeWidth="2.800" />],
  [
    "Log",
    "w-[62px]",
    <g key="g">
      <path d="M3.500 1.500H10L13 4.500V14.500H3.500Z" fill="#fff" />
      <path d="M5 6.500H11M5 8.500H11M5 10.500H11M5 12.500H11" stroke={BLUE} />
    </g>,
  ],
];

function BottomTabs() {
  return (
    <div className="mt-[6px] flex h-[26px] shrink-0 text-[12px] tracking-[-0.2px] text-black">
      <div className="flex w-[142px] items-center gap-[4px] bg-[#326bff] pl-[12px] tracking-[-0.45px] text-white">
        <svg width="16" height="16" viewBox="0 0 16 16" className="mb-[3px] shrink-0">
          <rect width="16" height="16" rx="2" fill="#0a78f0" />
          <path d="M5 2H9L10 3H14V9H5Z" fill="#f8d030" />
          <path d="M4 5H15L11.500 13H1Z" fill="#fff" />
        </svg>
        <span className="pt-px whitespace-nowrap">Data Management</span>
      </div>
      {tabs.map(([t, w, icon]) => (
        <div key={t} className={`mb-[2px] mt-px flex items-center gap-[4px] rounded-b-[2px] border-b border-r border-[#b4b4b4] bg-[#dadada] pl-[11px] ${w}`}>
          <svg width="16" height="16" viewBox="0 0 16 16" className="mb-[3px] shrink-0">
            <rect width="16" height="16" rx="1" fill={BLUE} />
            {icon}
          </svg>
          <span>{t}</span>
        </div>
      ))}
    </div>
  );
}

/* ---------- tools ---------- */

function Btn({ children, className = "", off = true }: Kids & { className?: string; off?: boolean }) {
  return (
    <span className={`flex h-[23px] shrink-0 items-center justify-center rounded-[2px] border bg-linear-to-b from-[#fdfdfd] to-[#ececec] text-[12px] whitespace-nowrap ${off ? "border-[#c4c4c4] text-[#bdbdbd]" : "border-[#a6a6a6] text-black"} ${className}`}>
      {children}
    </span>
  );
}

function XBtn() {
  return (
    <span className="flex h-[24px] w-[21px] shrink-0 items-center justify-end rounded-[2px] border border-[#aaa] bg-[#f4f4f4]">
      <svg width="17" height="17" viewBox="0 0 17 17">
        <rect x=".7" y=".7" width="15.600" height="15.600" fill="#fff" stroke="#555" strokeWidth="1.200" />
        <path d="M4 3L13 14M13 3L4 14" stroke="#555" strokeWidth="1.300" />
      </svg>
    </span>
  );
}

function Swatch({ color }: { color: string }) {
  return (
    <svg width="80" height="15" viewBox="0 0 80 15" className="shrink-0">
      <rect x=".5" y=".5" width="79" height="14" fill="#000" stroke="#777" />
      <path d="M6 7.500H76" stroke={color} strokeWidth="3" strokeDasharray="15 3" />
    </svg>
  );
}

function FillBox({ title, className, children }: Kids & { title: string; className: string }) {
  return (
    <div className={`flex flex-col ${className}`}>
      <span className="flex h-[20px] items-center pl-[2px]">{title}</span>
      <div className="flex flex-1 flex-col items-center rounded-[2px] border border-[#d0d0d0] bg-[#e8e8e8] pr-[2px] pt-[6px]">{children}</div>
    </div>
  );
}

const inset = "border border-[#a8a8a8] border-t-2 border-t-[#808080] rounded-[2px] bg-white flex items-center pl-[3px]";

const labels: [string, string][] = [
  ["RMFC", "bg-[#ff4daa]"],
  ["RTHI", "bg-[#ffa500]"],
  ["LTRO", "bg-[#0000ff]"],
  ["LLFC", "bg-[#0d00ff]"],
  ["LMFC", "bg-[#00ffff]"],
  ["LTHI", "bg-[#ffa500]"],
  ["RSHA", "bg-[#ff0000]"],
  ["RLMA", "bg-[#f8000a]"],
  ["RMMA", "bg-[#ff4daa]"],
  ["RTT", "bg-[#ffa500]"],
  ["RSHA2", "bg-[#00aa00]"],
  ["LSHA", "bg-[#0000ff]"],
];

function SectionHead({ children }: Kids) {
  return (
    <div className="flex h-[18px] shrink-0 items-end gap-[5px] pl-[2px] pr-[1px]">
      <span className="h-[18px] flex-1 border-b border-[#808080] text-[12px] leading-[17px] text-[#326bff]">{children}</span>
      <Chevron dir="up" w={11} h={7} className="mb-[-1px]" />
    </div>
  );
}

function Tools() {
  return (
    <aside className="flex w-[385px] shrink-0 flex-col text-[12px] tracking-[-0.3px] text-black">
      <div className="flex h-[66px] shrink-0 justify-between bg-[#303030] text-white">
        <span className="pl-[4px] pt-[4px]">Tools</span>
        <div className="flex w-[144px] flex-col pt-[2px]">
          <div className="ml-auto mr-[2px]">
            <PinIcons />
          </div>
          <div className="mt-[9px] flex gap-[5px]">
            <span className="flex h-[32px] w-[15px] items-center rounded-[2px] bg-[#326bff]">
              <svg width="15" height="32" viewBox="0 0 15 32">
                <path d="M0 14L3 11L7 14L6 21L0 24Z" fill="#fff" />
                <path d="M1 14Q2 5 7 4T13 11" fill="none" stroke="#d8e4ff" strokeWidth="1.300" />
              </svg>
            </span>
            <span className="flex h-[32px] w-[32px] items-center justify-center rounded-[2px] bg-[#585858]">
              <svg width="24" height="24" viewBox="0 0 24 24">
                <circle cx="12" cy="12" r="6.500" fill="none" stroke="#fff" strokeWidth="6" />
                <circle cx="12" cy="12" r="10" fill="none" stroke="#fff" strokeWidth="3.600" strokeDasharray="4.400 3.454" strokeDashoffset="2.200" />
              </svg>
            </span>
          </div>
        </div>
      </div>
      <div className="flex h-[33px] shrink-0 items-center pb-[4px] pl-[2px] pr-[2px]">
        <span className="w-[52px]">Subject:</span>
        <span className="flex h-[24px] flex-1 items-center justify-end rounded-[2px] border border-[#a6a6a6] bg-linear-to-b from-white to-[#e8e8e8] pr-[5px]">
          <Chevron w={9} h={5} />
        </span>
      </div>
      <SectionHead>Manual Labeling</SectionHead>
      <div className="mt-[10px] flex h-[23px] shrink-0 items-center pl-[33px]">
        <Chevron dir="left" w={8} h={15} />
        <Btn off={false} className="ml-[5px] w-[80px]">Backward</Btn>
        <Chevron dir="left" w={8} h={15} className="ml-[12px]" />
        <span className="ml-[6px] flex h-[23px] w-[80px] items-center justify-center rounded-[3px] bg-linear-to-b from-[#5b8bff] via-[#326bff] via-40% to-[#326bff] text-white">Whole</span>
        <Chevron dir="right" w={8} h={15} className="ml-[5px]" />
        <Btn off={false} className="ml-[13px] w-[80px]">Forward</Btn>
        <Chevron dir="right" w={8} h={15} className="ml-[5px]" />
      </div>
      <div className="ml-[2px] mt-[27px] flex h-[209px] w-[381px] shrink-0 border border-[#b5b5b5] bg-white">
        <div className="flex-1 overflow-hidden pt-px tracking-normal">
          {labels.map(([t, c]) => (
            <div key={t} className="flex h-[18px] items-center pl-[4px]">
              <i className={`h-[15px] w-[15px] rounded-full border border-black/15 ${c}`} />
              <span className="ml-[7px]">{t}</span>
            </div>
          ))}
        </div>
        <ScrollBar before="h-[35px] border-b border-[#b5b5b5]" thumb="h-[66px]" />
      </div>
      <div className="mt-[10px] flex h-[23px] shrink-0 items-center pl-[2px]">
        <span className="flex h-[14px] w-[14px] items-center justify-center bg-[#326bff] text-white">
          <Check size={12} strokeWidth={3} />
        </span>
        <span className="ml-[5px] w-[171px]">Auto advance selection</span>
        <Btn off={false} className="w-[169px]">Find Next Unlabeled Trajectory</Btn>
      </div>
      <div className="mt-[10px] h-[23px] shrink-0 pl-[2px]">
        <Btn className="w-[112px]">Swap Marker Labels</Btn>
      </div>
      <div className="mt-[7px]">
        <SectionHead>Gap Filling</SectionHead>
      </div>
      <div className="ml-[2px] mt-[13px] h-[70px] w-[381px] shrink-0 border border-[#a8a8a8] bg-white">
        <div className="grid h-[19px] grid-cols-[127px_126px_126px] border-b border-[#999] bg-linear-to-b from-[#fcfcfc] to-[#ededed] tracking-normal">
          <span className="flex items-center border-r border-[#c0c0c0] pl-[30px]">
            Trajectory{" "}
            <span className="mb-1 ml-auto mr-1">
              <Tri dir="up" />
            </span>
          </span>
          <span className="flex items-center justify-center border-r border-[#c0c0c0]">#Gaps</span>
          <span className="flex items-center justify-center">Max Gap Length</span>
        </div>
      </div>
      <div className="mt-[2px] flex h-[19px] shrink-0 items-center pl-[2px] pr-[2px]">
        <span className="w-[173px]">Prev Gap</span>
        <span>Range</span>
        <span className="ml-auto">Next Gap</span>
      </div>
      <div className="flex h-[24px] shrink-0 items-end pl-[2px]">
        <span className="flex h-[23px] w-[46px] items-center bg-[#a0a0a0] pl-[4px]">
          <Chevron dir="left" w={7} h={12} color="#fff" />
          <Chevron dir="left" w={7} h={12} color="#fff" className="-ml-[2px]" />
        </span>
        <span className={`${inset} ml-[6px] h-[23px] w-[135px]`}>0</span>
        <span className={`${inset} ml-[5px] h-[23px] w-[135px]`}>0</span>
        <span className="ml-[5px] flex h-[23px] w-[46px] items-center justify-end bg-[#a0a0a0] pr-[4px]">
          <Chevron dir="right" w={7} h={12} color="#fff" />
          <Chevron dir="right" w={7} h={12} color="#fff" className="-ml-[2px]" />
        </span>
      </div>
      <div className="mt-[2px] flex shrink-0 gap-[6px] pl-[3px]">
        <FillBox title="Spline Fill" className="h-[125px] w-[186px]">
          <Swatch color="#ff0000" />
          <span className="my-[2px] leading-[18px] tracking-[-0.1px]">Maximum gap length:</span>
          <span className={`${inset} h-[23px] w-[145px]`}>100</span>
          <div className="mt-[3px] flex gap-[3px]">
            <Btn className="w-[71px]">Fill</Btn>
            <Btn className="w-[71px]">All</Btn>
          </div>
        </FillBox>
        <FillBox title="Pattern Fill" className="h-[125px] w-[188px]">
          <Swatch color="#00ff00" />
          <span className="my-[2px] leading-[18px]">Empty</span>
          <div className="mt-[1px] flex w-[145px] items-center">
            <Btn className="w-[71px]">Pick Source</Btn>
            <Btn className="ml-[3px] w-[37px]">Auto</Btn>
            <Chevron w={6} h={4} className="ml-[2px] mt-[14px]" />
            <span className="ml-auto">
              <XBtn />
            </span>
          </div>
          <div className="mt-[5px] flex gap-[3px]">
            <Btn className="w-[71px]">Fill</Btn>
            <Btn className="w-[71px]">All</Btn>
          </div>
        </FillBox>
      </div>
      <div className="mt-[2px] flex shrink-0 gap-[6px] pl-[3px]">
        <FillBox title="Rigid Body Fill" className="h-[125px] w-[186px]">
          <Swatch color="#ff7200" />
          <span className="my-[2px] leading-[18px]">Empty</span>
          <div className="mt-[1px] flex w-[145px] items-center">
            <Btn className="w-[71px]">Pick Sources</Btn>
            <Btn className="ml-[3px] w-[37px]">Auto</Btn>
            <Chevron w={6} h={4} className="ml-[2px] mt-[14px]" />
            <span className="ml-auto">
              <XBtn />
            </span>
          </div>
          <div className="mt-[5px] flex gap-[3px]">
            <Btn className="w-[71px]">Fill</Btn>
            <Btn className="w-[71px]">All</Btn>
          </div>
        </FillBox>
        <FillBox title="Kinematic Fill" className="h-[125px] w-[188px]">
          <Swatch color="#ff00ff" />
          <span className="mt-[2px] leading-[18px]">Empty</span>
          <div className="mt-px flex w-[145px] items-center gap-[3px]">
            <Btn className="w-[120px]">Pick Segment</Btn>
            <XBtn />
          </div>
          <div className="mt-[3px] flex gap-[3px]">
            <Btn className="w-[71px]">Fill</Btn>
            <Btn className="w-[71px]">All</Btn>
          </div>
        </FillBox>
      </div>
      <div className="mt-[2px] shrink-0 pl-[3px]">
        <FillBox title="Cyclic Fill" className="h-[76px] w-[380px]">
          <Swatch color="#00ffff" />
          <div className="mt-[3px] flex gap-[3px]">
            <Btn className="w-[71px]">Fill</Btn>
            <Btn className="w-[71px]">All</Btn>
          </div>
        </FillBox>
      </div>
    </aside>
  );
}

/* ---------- system tray popup ---------- */

const Temp = ({ n }: { n: string }) => <span className="flex h-4 w-4 items-center justify-center bg-linear-to-b from-[#e8ffd8] via-[#7dfa20] to-[#5cf000] text-[11px] leading-none font-semibold text-black">{n}</span>;
const Ico = ({ children }: Kids) => (
  <svg width="16" height="16" viewBox="0 0 16 16">
    {children}
  </svg>
);

const tray: React.ReactNode[] = [
  <span className="flex h-4 w-[12px] items-center justify-center rounded-[6px] bg-[#0082fc]">
    <Bluetooth size={12} color="#fff" />
  </span>,
  <Ico>
    <circle cx="9.500" cy="6" r="4.600" fill="none" stroke="#f07808" strokeWidth="2.200" />
    <path d="M6.500 9.500L1.500 14.500" stroke="#d86000" strokeWidth="2.800" />
  </Ico>,
  <Ico>
    <path d="M1 0H11V10H1Z" fill="#063a5a" />
    <path d="M3 2H12L16 6V16H5L3 13Z" fill="#10b4d0" />
    <path d="M4 6H9V3L15 8.500L9 14V11H4Z" fill="#fff" />
  </Ico>,
  <Ico>
    <rect width="16" height="16" fill="#f8403c" />
    <path d="M6 4.500L9.500 8L6 11.500L2.500 8ZM9 5L10 4.500L13.500 8L10 11.500L9 11L12 8Z" fill="#fff" />
  </Ico>,
  <Ico>
    <circle cx="8" cy="8" r="8" fill="#e8e8e8" />
    <circle cx="8" cy="8" r="3.200" fill="#4a4846" />
    <path d="M1 7Q4 1 11 4M9 1Q15 4 12 11M15 9Q12 15 5 12M7 15Q1 12 4 5" fill="none" stroke="#4a4846" strokeWidth="1" />
  </Ico>,
  <Ico>
    <rect x="1.500" y="1.500" width="13" height="13" fill="#333" stroke="#d8d0b8" strokeWidth="1.200" />
    <path d="M4 3H6V9H4Z" fill="#f04020" />
    <path d="M6 3H8V9H6Z" fill="#f8c020" />
    <path d="M8 3H10V9H8Z" fill="#30b050" />
    <path d="M10 3H12V9H10Z" fill="#2080e8" />
    <path d="M4 10.500H6V12.500H4ZM7 10.500H9V12.500H7ZM10 10.500H12V12.500H10Z" fill="#eee" />
  </Ico>,
  <Ico>
    <path d="M1 2L10 1V14L1 12Z" fill="#666" />
    <circle cx="9" cy="7.500" r="3.800" fill="none" stroke="#eee" strokeWidth="1.400" />
    <path d="M11.500 10.500L14 13.500" stroke="#eee" strokeWidth="1.600" />
  </Ico>,
  <Temp n="37" />,
  <Temp n="32" />,
  <Temp n="44" />,
  <span className="flex h-[14px] w-[14px] items-center justify-center bg-[#35b890] text-[6px] leading-none font-semibold text-white">Wox</span>,
  <Ico>
    <path d="M4 14Q0 14 0 10.500T4 6Q5 2 9 2T13.500 7Q16 8 16 11T12.500 14Z" fill="#16c4d4" />
    <path d="M5 8L7.500 10.500L11 6.500" fill="none" stroke="#fff" strokeWidth="1.600" />
  </Ico>,
  <Ico>
    <rect x="2" y="2" width="8" height="8" fill="#e8f4ff" stroke="#aaa" />
    <path d="M6.500 2.500L4 6.500H7L5.500 9.500" stroke="#2090e0" fill="none" strokeWidth="1.400" />
    <path d="M5 12H10M6 14H9" stroke="#ccc" />
    <path d="M10 10L15 15M15 10L10 15" stroke="#e81020" strokeWidth="1.800" />
  </Ico>,
  <Ico>
    <circle cx="8" cy="8" r="7" fill="#1a86c4" stroke="#58c0f0" strokeWidth="1.400" />
    <path d="M3 8.500L9.500 9.500L12 4M9.500 9.500L12 13" fill="none" stroke="#fff" strokeWidth="1.200" />
    <circle cx="9.500" cy="9.500" r="1.500" fill="#fff" />
  </Ico>,
  <Temp n="34" />,
  <Ico>
    <path d="M1 3Q4 8 1 13M5 3H8Q12 3 12 8T8 13H5Q7 8 5 3Z" fill="none" stroke="#fff" strokeWidth="2.300" />
  </Ico>,
  <RefreshCw size={13} color="#eee" strokeWidth={2.2} />,
  <Ico>
    <rect x="1" y="1" width="14" height="14" rx="4" fill="#fff" />
    <path d="M6.500 2.500Q2 4 3 9L6 13" fill="none" stroke="#e83048" strokeWidth="2.800" />
    <path d="M9.500 3Q14 5 13 9L10 13" fill="none" stroke="#1c78e8" strokeWidth="2.800" />
  </Ico>,
  <Ico>
    <circle cx="8" cy="8" r="7" fill="#666" />
    <path d="M3.500 9.500L6.500 6L9 9L12.500 6.500" fill="none" stroke="#fff" strokeWidth="1.700" />
  </Ico>,
  <Ico>
    <circle cx="9" cy="4" r="4" fill="#9ab0c4" />
    <path d="M2 9H13L15 15H0Z" fill="#c4c8e0" />
    <path d="M7 8H11V11H7Z" fill="#8898b0" />
    <circle cx="11.500" cy="12.500" r="1.500" fill="#3048f0" />
  </Ico>,
  <span className="relative flex">
    <Shield size={16} fill="#12987c" color="#12987c" />
    <Check size={9} strokeWidth={3} color="#fff" className="absolute left-[3.500px] top-[3px]" />
  </span>,
  <Ico>
    <path d="M1 2H4V14H1Z" fill="#7a4422" />
    <path d="M4.500 1H7V14H4.500Z" fill="#4a3020" />
    <path d="M7 2H9.500L10.500 14H7.500Z" fill="#d8a850" />
    <path d="M10 3L12 2.500L15 13L12.500 14Z" fill="#5b90e0" />
  </Ico>,
  <Ico>
    <rect width="16" height="16" fill="#1c1c1c" />
    <rect x="7" y="4" width="6" height="8" fill="#76b83a" />
    <path d="M2.500 8Q6 3.500 11 8Q7 12.500 2.500 8Z" fill="#1c1c1c" stroke="#76b83a" strokeWidth="1.100" />
    <circle cx="7" cy="8" r="1.500" fill="#1c1c1c" stroke="#76b83a" />
  </Ico>,
];

function TrayPopup() {
  return (
    <div className="absolute left-[1575px] top-0 grid h-[201px] w-[202px] grid-cols-[repeat(5,40px)] grid-rows-[repeat(5,40px)] border border-t-0 border-[#a0a0a0] bg-[#363432]">
      {tray.map((icon, i) => (
        <div key={i} className={`flex items-center justify-center ${i === 4 ? "m-px bg-[#4a4846]" : ""}`}>
          {icon}
        </div>
      ))}
    </div>
  );
}

/* ---------- page ---------- */

export default function App() {
  return (
    <div className="relative flex h-[1040px] w-[1920px] flex-col overflow-hidden bg-[#ececec] font-['Noto_Sans',sans-serif] leading-[16px]">
      <TitleBar />
      <MenuBar />
      <Toolbar />
      <div className="flex min-h-0 flex-1">
        <Resources />
        <div className="flex w-[6px] shrink-0 items-center justify-center">
          <div className="h-[170px] border-l-2 border-dotted border-[#b8b8b8]" />
        </div>
        <main className="flex w-[1279px] shrink-0 flex-col">
          <div className="flex shrink-0 gap-[4px]">
            <ViewPane title="Subject Viewer" label="20200418 (DropFoot_wfH)" labelClass="left-[226px]" selected className="w-[638px]">
              <SubjectScene />
            </ViewPane>
            <ViewPane title="3D Perspective" label="dynamic" labelClass="left-[289px]" arrow className="w-[637px]">
              <PerspectiveScene />
            </ViewPane>
          </div>
          <div className="flex h-[4px] shrink-0 items-center justify-center">
            <div className="w-[250px] border-t-2 border-dotted border-[#b8b8b8]" />
          </div>
          <GraphHeader />
          <GraphPlots />
          <div className="h-[3px] shrink-0" />
          <Timeline />
          <BottomTabs />
        </main>
        <div className="flex w-[6px] shrink-0 items-center justify-center">
          <div className="h-[170px] border-l-2 border-dotted border-[#b8b8b8]" />
        </div>
        <Tools />
      </div>
      <TrayPopup />
    </div>
  );
}
